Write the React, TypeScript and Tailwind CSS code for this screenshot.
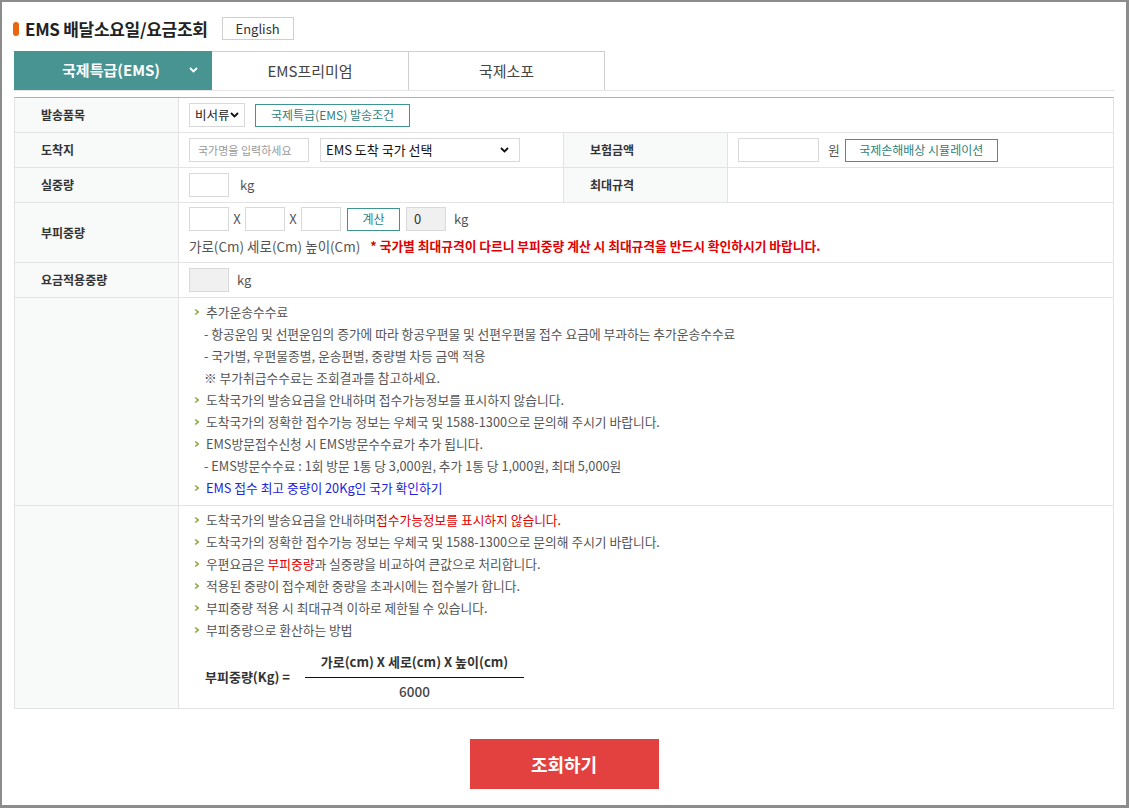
import React from 'react';

const font = { fontFamily: '"Noto Sans CJK KR", "Noto Sans", sans-serif' };

const Bullet = () => (
  <svg width="6" height="8" viewBox="0 0 6 8" className="mr-[6px] shrink-0">
    <path d="M1.2 1.5 L4.2 4 L1.2 6.5" fill="none" stroke="#8aa73a" strokeWidth="1.6" />
  </svg>
);

const Line = ({ children, bullet = true }: { children: React.ReactNode; bullet?: boolean }) => (
  <div className="flex items-center h-[22px]">
    {bullet ? <Bullet /> : <span className="w-[10px] shrink-0" />}
    <span>{children}</span>
  </div>
);

const Chevron = ({ color = '#111' }: { color?: string }) => (
  <svg width="9" height="6" viewBox="0 0 9 6">
    <path d="M1 1 L4.5 4.5 L8 1" fill="none" stroke={color} strokeWidth="1.8" />
  </svg>
);

const Label = ({ children, className = '' }: { children: React.ReactNode; className?: string }) => (
  <div className={`w-[164px] shrink-0 bg-[#f8f9f9] border-r border-[#e3e3e3] flex items-center pl-[26px] font-bold text-[12px] text-[#333] ${className}`}>
    {children}
  </div>
);

const Box = ({ className = '', children }: { className?: string; children?: React.ReactNode }) => (
  <div className={`h-[24px] border border-[#d9d9d9] flex items-center ${className}`}>{children}</div>
);

const TealBtn = ({ children, className = '' }: { children: React.ReactNode; className?: string }) => (
  <button className={`h-[23px] border border-[#3f9390] bg-white text-[#2f7f7c] text-[12px] flex items-center justify-center ${className}`}>
    {children}
  </button>
);

export default function App() {
  return (
    <div
      style={font}
      className="w-[1129px] h-[808px] bg-white border-l-2 border-t-2 border-r-[3px] border-b-[3px] border-[#8c8c8c] text-[#555] text-[12.75px] overflow-hidden"
    >
      {/* title */}
      <div className="flex items-center pl-[11px] pt-[15px] h-[38px]">
        <span className="w-[6px] h-[14px] rounded-full bg-[#e9650f] mr-[6px]" />
        <h1 className="text-[17px] font-bold text-[#222] tracking-[-0.3px]">EMS 배달소요일/요금조회</h1>
        <button className="ml-[14px] w-[72px] h-[23px] border border-[#cfcfcf] text-[13px] text-[#333] bg-white">English</button>
      </div>

      {/* tabs */}
      <div className="flex mt-[11px] ml-[12px] w-[1100px] h-[40px] border-b border-[#e5e5e5]">
        <div className="w-[198px] bg-[#489492] text-white font-bold text-[15px] flex items-center relative">
          <span className="flex-1 text-center pr-[4px]">국제특급(EMS)</span>
          <span className="absolute right-[14px] top-[16px]"><Chevron color="#fff" /></span>
        </div>
        <div className="w-[197px] border-t border-r border-[#cfcfcf] flex items-center justify-center text-[15px] text-[#444]">EMS프리미엄</div>
        <div className="w-[196px] border-t border-r border-[#cfcfcf] flex items-center justify-center text-[15px] text-[#444]">국제소포</div>
      </div>

      {/* table */}
      <div className="ml-[12px] mt-[6px] w-[1100px] border-t border-[#b0b0b0] border-x border-x-[#e3e3e3]">
        <div className="flex h-[35px] border-b border-[#e3e3e3]">
          <Label>발송품목</Label>
          <div className="flex items-center pl-[10px] gap-[10px]">
            <Box className="w-[56px] px-[5px] justify-between text-[#222] text-[12.5px]">
              <span>비서류</span>
              <Chevron />
            </Box>
            <TealBtn className="w-[155px]">국제특급(EMS) 발송조건</TealBtn>
          </div>
        </div>

        <div className="flex h-[35px] border-b border-[#e3e3e3]">
          <Label>도착지</Label>
          <div className="w-[385px] border-r border-[#e3e3e3] flex items-center pl-[10px]">
            <Box className="w-[120px] pl-[8px] text-[#999] text-[11px]">국가명을 입력하세요</Box>
            <Box className="w-[200px] ml-[11px] pl-[5px] pr-[10px] justify-between text-[#111] text-[13px]">
              <span>EMS 도착 국가 선택</span>
              <Chevron />
            </Box>
          </div>
          <Label>보험금액</Label>
          <div className="flex items-center pl-[10px]">
            <Box className="w-[81px]" />
            <span className="ml-[9px] text-[#555]">원</span>
            <TealBtn className="ml-[5px] w-[153px]">국제손해배상 시뮬레이션</TealBtn>
          </div>
        </div>

        <div className="flex h-[35px] border-b border-[#e3e3e3]">
          <Label>실중량</Label>
          <div className="w-[385px] border-r border-[#e3e3e3] flex items-center pl-[10px]">
            <Box className="w-[40px]" />
            <span className="ml-[11px] text-[13px]">kg</span>
          </div>
          <Label>최대규격</Label>
          <div />
        </div>

        <div className="flex h-[60px] border-b border-[#e3e3e3]">
          <Label>부피중량</Label>
          <div className="flex flex-col pl-[10px] pt-[4px]">
            <div className="flex items-center">
              <Box className="w-[40px]" />
              <span className="w-[16px] text-center text-[13px]">X</span>
              <Box className="w-[40px]" />
              <span className="w-[16px] text-center text-[13px]">X</span>
              <Box className="w-[40px]" />
              <TealBtn className="ml-[6px] w-[53px]">계산</TealBtn>
              <Box className="ml-[6px] w-[40px] bg-[#f0f0f0] pl-[7px] text-[#333] text-[13px]">0</Box>
              <span className="ml-[8px] text-[13px]">kg</span>
            </div>
            <div className="flex items-center h-[22px] mt-[4px]">
              <span className="text-[13.5px]">가로(Cm) 세로(Cm) 높이(Cm)</span>
              <span className="ml-[10px] text-[#e00000] font-bold">* 국가별 최대규격이 다르니 부피중량 계산 시 최대규격을 반드시 확인하시기 바랍니다.</span>
            </div>
          </div>
        </div>

        <div className="flex h-[35px] border-b border-[#e3e3e3]">
          <Label>요금적용중량</Label>
          <div className="flex items-center pl-[10px]">
            <Box className="w-[40px] bg-[#f0f0f0]" />
            <span className="ml-[8px] text-[13px]">kg</span>
          </div>
        </div>

        <div className="flex h-[208px] border-b border-[#e3e3e3]">
          <Label> </Label>
          <div className="pl-[15px] pt-[3px]">
            <Line>추가운송수수료</Line>
            <Line bullet={false}>- 항공운임 및 선편운임의 증가에 따라 항공우편물 및 선편우편물 접수 요금에 부과하는 추가운송수수료</Line>
            <Line bullet={false}>- 국가별, 우편물종별, 운송편별, 중량별 차등 금액 적용</Line>
            <Line bullet={false}>※ 부가취급수수료는 조회결과를 참고하세요.</Line>
            <Line>도착국가의 발송요금을 안내하며 접수가능정보를 표시하지 않습니다.</Line>
            <Line>도착국가의 정확한 접수가능 정보는 우체국 및 1588-1300으로 문의해 주시기 바랍니다.</Line>
            <Line>EMS방문접수신청 시 EMS방문수수료가 추가 됩니다.</Line>
            <Line bullet={false}>- EMS방문수수료 : 1회 방문 1통 당 3,000원, 추가 1통 당 1,000원, 최대 5,000원</Line>
            <Line><span className="text-[#2222dd]">EMS 접수 최고 중량이 20Kg인 국가 확인하기</span></Line>
          </div>
        </div>

        <div className="flex h-[203px] border-b border-[#e3e3e3]">
          <Label> </Label>
          <div className="pl-[15px] pt-[3px] flex flex-col">
            <Line>도착국가의 발송요금을 안내하며<span className="text-[#e00000]">접수가능정보를 표시하지 않습니다.</span></Line>
            <Line>도착국가의 정확한 접수가능 정보는 우체국 및 1588-1300으로 문의해 주시기 바랍니다.</Line>
            <Line>우편요금은 <span className="text-[#e00000]">부피중량</span>과 실중량을 비교하여 큰값으로 처리합니다.</Line>
            <Line>적용된 중량이 접수제한 중량을 초과시에는 접수불가 합니다.</Line>
            <Line>부피중량 적용 시 최대규격 이하로 제한될 수 있습니다.</Line>
            <Line>부피중량으로 환산하는 방법</Line>
            <div className="flex items-center mt-[10px] ml-[11px]">
              <span className="font-bold text-[#333] text-[13px] w-[100px]">부피중량(Kg) =</span>
              <div className="flex flex-col items-center w-[219px]">
                <span className="font-bold text-[#333] text-[13px] h-[22px] leading-[22px]">가로(cm) X 세로(cm) X 높이(cm)</span>
                <span className="w-full h-px bg-[#111] mt-[4px]" />
                <span className="h-[22px] leading-[22px] mt-[2px] text-[#444] text-[13.5px] font-medium">6000</span>
              </div>
            </div>
          </div>
        </div>
      </div>

      <div className="flex justify-center mt-[30px]">
        <button className="w-[189px] h-[50px] bg-[#e24140] text-white text-[18px] font-bold">조회하기</button>
      </div>
    </div>
  );
}
